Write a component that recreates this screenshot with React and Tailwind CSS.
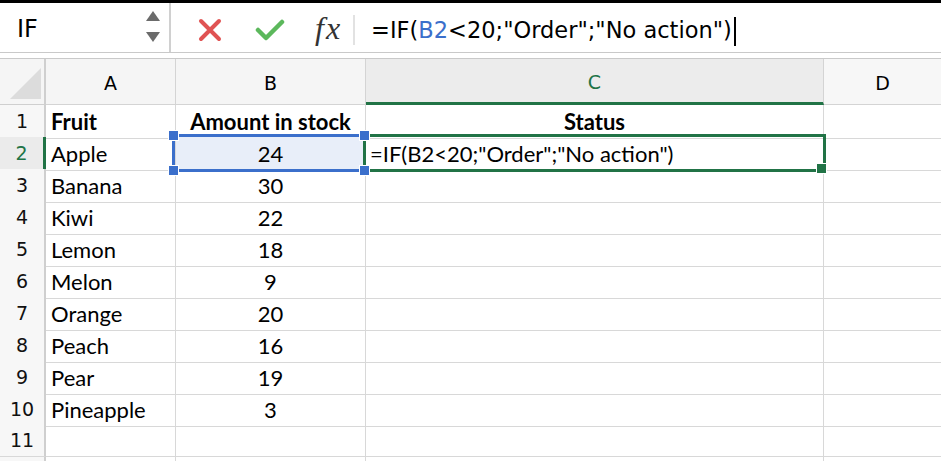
import React from 'react';

const cellFont = { fontFamily: 'Lato, "Open Sans", sans-serif' };
const uiFont = { fontFamily: '"DejaVu Sans", Verdana, sans-serif' };

const data = [
  ['Fruit', 'Amount in stock', 'Status'],
  ['Apple', '24', '=IF(B2<20;"Order";"No action")'],
  ['Banana', '30', ''],
  ['Kiwi', '22', ''],
  ['Lemon', '18', ''],
  ['Melon', '9', ''],
  ['Orange', '20', ''],
  ['Peach', '16', ''],
  ['Pear', '19', ''],
  ['Pineapple', '3', ''],
  ['', '', ''],
  ['', '', ''],
];

const Arrows = () => (
  <svg width="16" height="34" viewBox="0 0 16 34">
    <polygon points="8,0 15,10 1,10" fill="#6b6b6b" />
    <polygon points="1,21 15,21 8,31" fill="#6b6b6b" />
  </svg>
);

const CancelIcon = () => (
  <svg width="24" height="24" viewBox="0 0 24 24">
    <path d="M3 3 L21 21 M21 3 L3 21" stroke="#e05353" strokeWidth="4" strokeLinecap="round" />
  </svg>
);

const CheckIcon = () => (
  <svg width="30" height="24" viewBox="0 0 30 24">
    <path d="M3 12 L11 20 L27 4" stroke="#5cb85c" strokeWidth="4.5" fill="none" strokeLinecap="round" strokeLinejoin="round" />
  </svg>
);

const Handle = ({ className }) => (
  <div className={`absolute w-[11px] h-[11px] border border-white ${className}`} />
);

export default function App() {
  return (
    <div className="w-[941px] h-[461px] overflow-hidden bg-white">
      <div className="h-[3px] bg-black" />

      {/* formula bar */}
      <div className="h-[50px] flex border-b border-[#c9c9c9]">
        <div className="w-[171px] flex items-center justify-between pl-[17px] pr-[8px] border-r-2 border-[#d0d0d0]">
          <span className="text-[24px] text-black pt-[2px]" style={uiFont}>IF</span>
          <Arrows />
        </div>
        <div className="flex items-center pt-[4px]">
          <div className="ml-[27px]"><CancelIcon /></div>
          <div className="ml-[33px]"><CheckIcon /></div>
          <span
            className="ml-[30px] text-[32px] italic tracking-[2px] text-[#333] leading-none -mt-[4px]"
            style={{ fontFamily: '"Liberation Serif", "DejaVu Serif", serif' }}
          >
            fx
          </span>
          <div className="ml-[11px] w-[2px] h-[30px] bg-[#e2e2e2]" />
          <div className="ml-[16px] flex items-center text-[22.5px] text-black pt-[3px]" style={uiFont}>
            <span>=IF(</span>
            <span className="text-[#3b6fcb]">B2</span>
            <span>&lt;20;"Order";"No action")</span>
            <span className="ml-[2px] w-[2px] h-[29px] bg-black" />
          </div>
        </div>
      </div>
      <div className="h-[6px] border-b border-[#c9c9c9]" />

      {/* sheet */}
      <div className="relative">
        <div className="grid grid-cols-[46px_130px_190px_458px_1fr] h-[46px]">
          <div className="relative bg-[#f5f5f5] border-r-2 border-b border-[#cfcfcf]">
            <svg className="absolute left-[10px] top-[9px]" width="31" height="31" viewBox="0 0 31 31">
              <polygon points="0,31 31,31 31,0" fill="#dcdcdc" />
            </svg>
          </div>
          <div className="flex items-center justify-center pt-[4px] bg-[#f5f5f5] border-r border-b border-[#d4d4d4] text-[19px]" style={uiFont}>A</div>
          <div className="flex items-center justify-center pt-[4px] bg-[#f5f5f5] border-r border-b border-[#d4d4d4] text-[19px]" style={uiFont}>B</div>
          <div className="flex items-center justify-center pt-[4px] bg-[#ececec] border-r border-[#d4d4d4] border-b-[3px] border-b-[#217346] text-[19px] text-[#217346]" style={uiFont}>C</div>
          <div className="flex items-center justify-center pt-[4px] bg-[#f7f7f7] border-b border-[#d4d4d4] text-[19px]" style={uiFont}>D</div>
        </div>

        {data.map((row, i) => {
          const active = i === 1;
          const bold = i === 0 ? 'font-bold' : '';
          return (
            <div key={i} className="grid grid-cols-[46px_130px_190px_458px_1fr] h-[32px]">
              <div
                className={`flex items-center justify-center text-[19px] border-b border-b-[#d8d8d8] ${
                  active
                    ? 'bg-[#ebebeb] text-[#217346] border-r-[3px] border-r-[#217346]'
                    : 'bg-[#f7f7f7] text-[#111] border-r-2 border-r-[#cfcfcf]'
                }`}
                style={uiFont}
              >
                {i < 11 ? i + 1 : ''}
              </div>
              <div className={`flex items-center pl-[5px] text-[22px] text-black border-r border-b border-[#d8d8d8] ${bold}`} style={cellFont}>
                {row[0]}
              </div>
              <div
                className={`flex items-center justify-center text-[22px] text-black border-r border-b border-[#d8d8d8] ${bold} ${active ? 'bg-[#e8eef9]' : ''}`}
                style={cellFont}
              >
                {row[1]}
              </div>
              <div
                className={`flex items-center text-[22px] text-black border-r border-b border-[#d8d8d8] whitespace-nowrap ${bold} ${
                  i === 0 ? 'justify-center' : 'pl-[4px]'
                }`}
                style={cellFont}
              >
                {row[2]}
              </div>
              <div className="border-b border-[#d8d8d8]" />
            </div>
          );
        })}

        {/* B2 reference highlight */}
        <div className="absolute left-[172px] top-[75px] w-[194px] h-[38px] border-[3px] border-[#3b6fcb]" />
        {/* C2 active cell */}
        <div className="absolute left-[363px] top-[75px] w-[463px] h-[38px] border-[3px] border-[#217346]" />
        <Handle className="left-[816px] top-[104px] bg-[#217346]" />
        <Handle className="left-[168px] top-[71px] bg-[#3b6fcb]" />
        <Handle className="left-[359px] top-[71px] bg-[#3b6fcb]" />
        <Handle className="left-[168px] top-[106px] bg-[#3b6fcb]" />
        <Handle className="left-[359px] top-[106px] bg-[#3b6fcb]" />
      </div>
    </div>
  );
}
